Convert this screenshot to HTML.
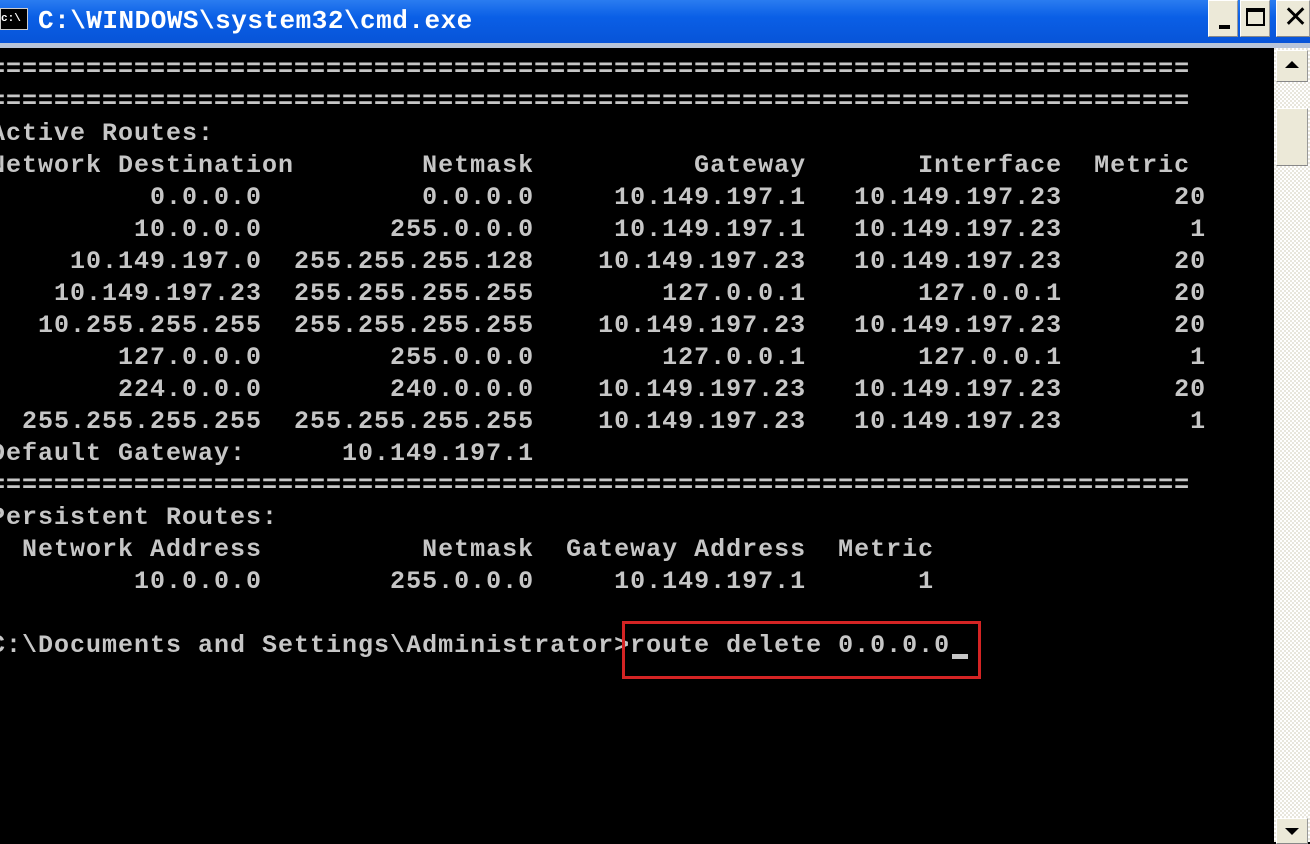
<!DOCTYPE html>
<html><head><meta charset="utf-8"><style>
*{margin:0;padding:0;box-sizing:border-box}
html,body{width:1310px;height:842px;overflow:hidden;background:#000}
#title{position:absolute;left:0;top:0;width:1310px;height:43px;background:linear-gradient(#2a7cf0,#0a5fe6 40%,#0854d8);}
#sep{position:absolute;left:0;top:43px;width:1310px;height:5px;background:#b8c4d8}
#ico{position:absolute;left:0;top:8px;width:28px;height:22px;background:#000;border:1px solid #ccc;color:#fff;font:bold 11px "Liberation Mono",monospace;line-height:20px}
#tt{position:absolute;left:38px;top:4px;color:#fff;font:bold 26px "Liberation Mono",monospace;letter-spacing:0.5px;line-height:34px}
.btn{position:absolute;top:0;height:37px;background:#ece9d8;border:1px solid #fff;border-right-color:#999;border-bottom-color:#888}
pre{position:absolute;left:-10px;top:54px;color:#c6c6c6;font:bold 25px/32px "Liberation Mono",monospace;letter-spacing:1px;white-space:pre}
#sb{position:absolute;left:1274px;top:48px;width:36px;height:794px;background-color:#f4f3ee;background-image:repeating-conic-gradient(#fff 0 25%,#e8e6dc 0 50%);background-size:4px 4px}
.sbb{position:absolute;left:1276px;width:32px;background:#ece9d8;border:1px solid #fff;border-right-color:#999;border-bottom-color:#888}
#box{position:absolute;left:622px;top:621px;width:359px;height:58px;border:3px solid #d42424}
#cur{position:absolute;left:952px;top:654px;width:16px;height:5px;background:#c6c6c6}
</style></head><body>
<div id="title"></div>
<div id="ico">c:\</div>
<div id="tt">C:\WINDOWS\system32\cmd.exe</div>
<div class="btn" style="left:1208px;width:30px"><div style="position:absolute;left:10px;top:24px;width:11px;height:4px;background:#000"></div></div>
<div class="btn" style="left:1240px;width:30px"><div style="position:absolute;left:5px;top:7px;width:19px;height:18px;border:2px solid #000;border-top-width:4px"></div></div>
<div class="btn" style="left:1276px;width:34px"><div style="position:absolute;left:6px;top:0;font:bold 30px 'DejaVu Sans',sans-serif;line-height:34px;color:#000">✕</div></div>
<div id="sep"></div>
<pre>===========================================================================
===========================================================================
Active Routes:
Network Destination        Netmask          Gateway       Interface  Metric
          0.0.0.0          0.0.0.0     10.149.197.1   10.149.197.23       20
         10.0.0.0        255.0.0.0     10.149.197.1   10.149.197.23        1
     10.149.197.0  255.255.255.128    10.149.197.23   10.149.197.23       20
    10.149.197.23  255.255.255.255        127.0.0.1       127.0.0.1       20
   10.255.255.255  255.255.255.255    10.149.197.23   10.149.197.23       20
        127.0.0.0        255.0.0.0        127.0.0.1       127.0.0.1        1
        224.0.0.0        240.0.0.0    10.149.197.23   10.149.197.23       20
  255.255.255.255  255.255.255.255    10.149.197.23   10.149.197.23        1
Default Gateway:      10.149.197.1
===========================================================================
Persistent Routes:
  Network Address          Netmask  Gateway Address  Metric
         10.0.0.0        255.0.0.0     10.149.197.1       1

C:\Documents and Settings\Administrator>route delete 0.0.0.0</pre>
<div id="cur"></div>
<div id="box"></div>
<div id="sb"></div>
<div class="sbb" style="top:50px;height:32px"><div style="position:absolute;left:8px;top:10px;width:0;height:0;border-left:7px solid transparent;border-right:7px solid transparent;border-bottom:7px solid #000"></div></div>
<div class="sbb" style="top:108px;height:58px"></div>
<div class="sbb" style="top:818px;height:26px"><div style="position:absolute;left:8px;top:9px;width:0;height:0;border-left:7px solid transparent;border-right:7px solid transparent;border-top:7px solid #000"></div></div>
</body></html>
